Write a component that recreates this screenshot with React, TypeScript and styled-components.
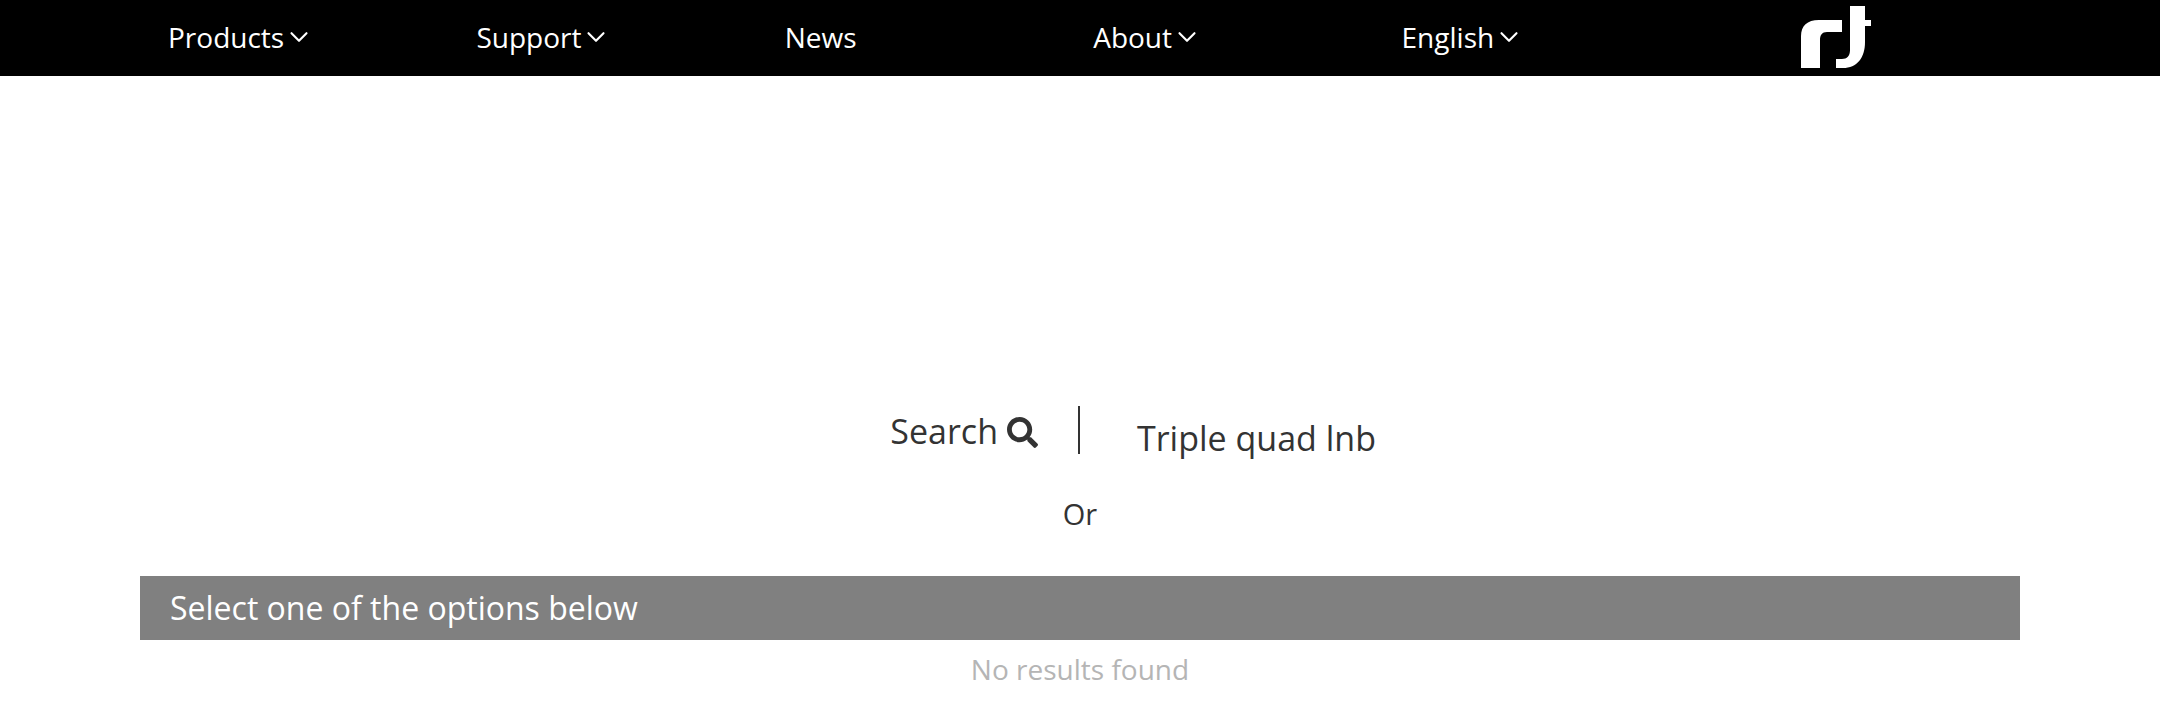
import React from "react";
import styled, { createGlobalStyle } from "styled-components";
import { FaSearch } from "react-icons/fa";
import { FiChevronDown } from "react-icons/fi";

const Global = createGlobalStyle`
  html, body { margin: 0; padding: 0; background: #fff; }
  body { font-family: "Open Sans", sans-serif; color: #333; overflow: hidden; }
`;

const Page = styled.div`
  width: 2160px;
  height: 710px;
`;

const NavBar = styled.nav`
  height: 76px;
  background: #000;
  padding-left: 140px;
  display: grid;
  grid-template-columns: repeat(5, 308.4px) 1fr;
  align-items: center;
`;

const NavItem = styled.div`
  display: flex;
  align-items: center;
  padding: 0 0 2px 28px;
  box-sizing: border-box;
  color: #fff;
  font-size: 28px;
  line-height: 38px;
  height: 76px;
`;

const Caret = styled(FiChevronDown)`
  margin-left: 0;
  stroke-width: 1.7;
`;

const LogoCell = styled.div`
  display: flex;
  align-items: center;
  height: 76px;
  padding: 0 0 2px 119px;
  box-sizing: border-box;
`;

const SearchSection = styled.section`
  padding-top: 330px;
  display: flex;
  flex-direction: column;
  align-items: center;
`;

const SearchRow = styled.div`
  display: grid;
  grid-template-columns: 1fr 1fr;
  height: 48px;
  width: 100%;
`;

const SearchLabel = styled.div`
  height: 48px;
  padding: 2px 40px 0 0;
  display: flex;
  align-items: center;
  justify-content: flex-end;
  gap: 9px;
  font-size: 34px;
  border-right: 2px solid #333;
  box-sizing: border-box;
  color: #333;
`;

const SearchIcon = styled(FaSearch)`
  margin-top: 2px;
`;

const SearchValue = styled.div`
  padding-left: 57px;
  font-size: 34px;
  line-height: 64px;
  height: 48px;
  color: #333;
`;

const OrText = styled.div`
  margin-top: 40px;
  font-size: 29px;
  line-height: 40px;
  color: #333;
`;

const OptionsBar = styled.div`
  margin: 42px 140px 0;
  height: 64px;
  background: #808080;
  color: #fff;
  font-size: 32px;
  line-height: 64px;
  padding-left: 30px;
`;

const NoResults = styled.div`
  text-align: center;
  color: #b5b5b5;
  font-size: 28px;
  line-height: 58px;
`;

const Logo = () => (
  <svg width="70" height="62" viewBox="0 0 70 62" aria-label="logo">
    <path fill="#fff" d="M0 62V30C0 20 6 14 18 14H41V26H26C21 26 19 29 19 34V62Z" />
    <path fill="#fff" d="M49 0H64V14H70V20H64V36C64 52 56 62 42 62H35V53H41C46 53 49 50 49 44Z" />
  </svg>
);

const items: { label: string; caret: boolean }[] = [
  { label: "Products", caret: true },
  { label: "Support", caret: true },
  { label: "News", caret: false },
  { label: "About", caret: true },
  { label: "English", caret: true },
];

export default function App() {
  return (
    <Page>
      <Global />
      <NavBar>
        {items.map((i) => (
          <NavItem key={i.label}>
            {i.label}
            {i.caret && <Caret size={30} />}
          </NavItem>
        ))}
        <LogoCell>
          <Logo />
        </LogoCell>
      </NavBar>
      <SearchSection>
        <SearchRow>
          <SearchLabel>
            Search <SearchIcon size={31} />
          </SearchLabel>
          <SearchValue>Triple quad lnb</SearchValue>
        </SearchRow>
        <OrText>Or</OrText>
      </SearchSection>
      <OptionsBar>Select one of the options below</OptionsBar>
      <NoResults>No results found</NoResults>
    </Page>
  );
}
